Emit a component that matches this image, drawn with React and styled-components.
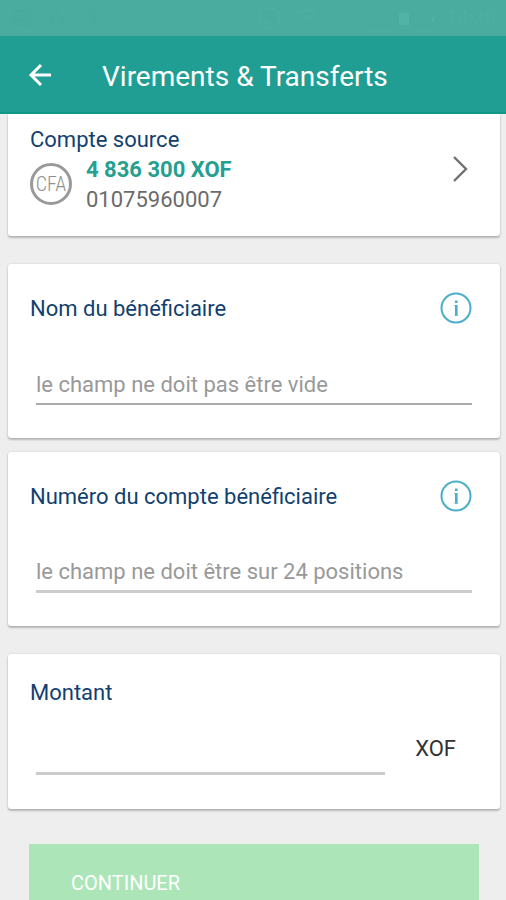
import React, { useState } from "react";
import styled, { createGlobalStyle } from "styled-components";

const GlobalStyle = createGlobalStyle`
  *, *::before, *::after { box-sizing: border-box; }
  body { margin: 0; background: #eeeeee; font-family: Roboto, "Liberation Sans", sans-serif; }
  button, input { font: inherit; }
`;

const Screen = styled.div`
  display: flex;
  flex-direction: column;
  height: 100vh;
`;

const StatusBar = styled.div`
  display: flex;
  flex: none;
  align-items: center;
  justify-content: space-between;
  height: 36px;
  padding: 0 10px;
  background: #49ac9e;
  color: #47aa9c;
`;

const StatusGroup = styled.div`
  display: flex;
  align-items: center;
  gap: 12px;
`;

const Clock = styled.span`
  color: #4cafa1;
  font-size: 20px;
  line-height: 20px;
`;

const AppBar = styled.header`
  display: flex;
  flex: none;
  align-items: center;
  gap: 46px;
  height: 78px;
  padding: 2px 24px 0;
  background: #209e93;
  border-bottom: 2px solid #129688;
  color: #ffffff;
`;

const IconButton = styled.button`
  display: flex;
  padding: 0;
  border: 0;
  background: none;
  color: ${({ $color }) => $color};
  cursor: pointer;
`;

const Title = styled.h1`
  margin: 0;
  padding-top: 4px;
  font-size: 28px;
  line-height: 32px;
  font-weight: 400;
`;

const Content = styled.main`
  flex: 1;
  min-height: 0;
  padding: 0 6px 28px 8px;
  overflow-y: auto;
  scrollbar-width: none;
`;

const Card = styled.section`
  padding: ${({ $padding }) => $padding || "28px 28px 33px 22px"};
  margin-bottom: ${({ $gap }) => $gap}px;
  border-radius: 3px;
  background: #ffffff;
  box-shadow: 0 2px 2px rgba(0, 0, 0, 0.22), 0 0 2px rgba(0, 0, 0, 0.16);
`;

const SourceCard = styled(Card)`
  display: flex;
  align-items: center;
  justify-content: space-between;
  border-radius: 0 0 3px 3px;
`;

const Heading = styled.h2`
  margin: 0;
  color: #123f70;
  font-size: 22px;
  line-height: 30px;
  font-weight: 400;
`;

const Account = styled.div`
  display: flex;
  align-items: flex-start;
  gap: 14px;
`;

const Badge = styled.div`
  display: flex;
  padding-top: 8px;
`;

const AccountText = styled.div`
  font-size: 22px;
  line-height: 30px;
`;

const Balance = styled.div`
  color: #259f91;
  font-weight: 700;
`;

const AccountNumber = styled.div`
  color: #6b6b6b;
`;

const FieldHeader = styled.div`
  display: flex;
  align-items: center;
  justify-content: space-between;
  height: 32px;
`;

const FieldLabel = styled.label`
  display: block;
  padding-top: 2px;
  color: #123f70;
  font-size: 22px;
  line-height: 30px;
`;

const FieldRow = styled.div`
  display: flex;
  align-items: flex-start;
  gap: 30px;
  padding: ${({ $padding }) => $padding || "39px 0 0 6px"};
`;

const TextField = styled.input`
  flex: 1;
  min-width: 0;
  height: 42px;
  padding: 2px 0 0;
  border: 0;
  border-bottom: ${({ $line }) => $line};
  border-radius: 0;
  outline: 0;
  background: none;
  color: #333333;
  font-size: 22px;
  &::placeholder { color: #999999; opacity: 1; }
`;

const Currency = styled.span`
  color: #333333;
  font-size: 22px;
  line-height: 32px;
`;

const SubmitButton = styled.button`
  display: block;
  width: calc(100% - 42px);
  height: 78px;
  margin: 0 21px;
  padding: 0 42px;
  border: 0;
  background: #ace6b8;
  color: #ffffff;
  font-size: 20px;
  text-align: left;
  cursor: pointer;
`;

const BackIcon = () => (
  <svg width="32" height="32" viewBox="0 0 32 32" fill="none" stroke="currentColor" strokeWidth="3" aria-hidden="true">
    <path d="M27 16H7M17 6L7 16l10 10" />
  </svg>
);

const ChevronIcon = () => (
  <svg width="16" height="28" viewBox="0 0 16 28" fill="none" stroke="currentColor" strokeWidth="2.400" aria-hidden="true">
    <path d="M2 1l12 12L2 25" />
  </svg>
);

const InfoIcon = () => (
  <svg width="32" height="32" viewBox="0 0 32 32" fill="none" aria-hidden="true">
    <circle cx="16" cy="16" r="14.500" stroke="currentColor" strokeWidth="2" />
    <path d="M15 8.500h2.600v2.500H15zM14.200 13h3.400v10h.6v.8h-3.800V23h.6v-9.200h-.8z" fill="currentColor" />
  </svg>
);

const CfaIcon = () => (
  <svg width="42" height="42" viewBox="0 0 42 42" aria-hidden="true">
    <circle cx="21" cy="21" r="19.500" fill="none" stroke="#999999" strokeWidth="3" />
    <text x="21" y="28" textAnchor="middle" fill="#8f8f8f" fontFamily="Roboto Condensed, Roboto, sans-serif" fontWeight="300" fontSize="20">CFA</text>
  </svg>
);

const NoticeIcons = () => (
  <svg width="90" height="24" viewBox="0 0 90 24" fill="none" stroke="currentColor" strokeWidth="2" aria-hidden="true">
    <path d="M4 5h16v14H4zM4 17l5-6 4 4 3-3 4 5M40 18l7-12 7 12zM88 6c-8-4-12 1-6 5 6 2 4 8-3 6" />
  </svg>
);

const SignalIcons = () => (
  <svg width="180" height="24" viewBox="0 0 180 24" fill="none" stroke="currentColor" strokeWidth="2" aria-hidden="true">
    <circle cx="16" cy="12" r="10" stroke="#4cafa1" />
    <path d="M9 5l14 14" />
    <path d="M44 8c6-5 12-5 18 0M48 13c3-3 7-3 10 0" stroke="#4cafa1" />
    <path d="M114 20h24M160 20h16" />
    <path d="M145 7h10v12h-10zM178 11h2v4h-2z" fill="#51b3a6" stroke="none" />
  </svg>
);

function Field({ id, label, placeholder, line, gap }) {
  const [value, setValue] = useState("");
  return (
    <Card $gap={gap}>
      <FieldHeader>
        <FieldLabel htmlFor={id}>{label}</FieldLabel>
        <IconButton type="button" $color="#4baec8" aria-label={"Informations : " + label}>
          <InfoIcon />
        </IconButton>
      </FieldHeader>
      <FieldRow>
        <TextField id={id} placeholder={placeholder} value={value} $line={line} onChange={(e) => setValue(e.target.value)} />
      </FieldRow>
    </Card>
  );
}

export default function App() {
  const [amount, setAmount] = useState("");
  return (
    <>
      <GlobalStyle />
      <Screen>
        <StatusBar>
          <NoticeIcons />
          <StatusGroup>
            <SignalIcons />
            <Clock>14:30</Clock>
          </StatusGroup>
        </StatusBar>
        <AppBar>
          <IconButton type="button" $color="#ffffff" aria-label="Retour">
            <BackIcon />
          </IconButton>
          <Title>Virements &amp; Transferts</Title>
        </AppBar>
        <Content>
          <SourceCard $padding="11px 32px 21px 22px" $gap={28}>
            <div>
              <Heading>Compte source</Heading>
              <Account>
                <Badge>
                  <CfaIcon />
                </Badge>
                <AccountText>
                  <Balance>4 836 300 XOF</Balance>
                  <AccountNumber>01075960007</AccountNumber>
                </AccountText>
              </Account>
            </div>
            <IconButton type="button" $color="#707070" aria-label="Choisir le compte source">
              <ChevronIcon />
            </IconButton>
          </SourceCard>
          <Field id="name" label="Nom du bénéficiaire" placeholder="le champ ne doit pas être vide" line="2px solid #aaaaaa" gap={14} />
          <Field id="account" label="Numéro du compte bénéficiaire" placeholder="le champ ne doit être sur 24 positions" line="3px solid #cccccc" gap={28} />
          <Card $padding="22px 28px 34px 22px" $gap={35}>
            <FieldLabel htmlFor="amount">Montant</FieldLabel>
            <FieldRow $padding="25px 16px 0 6px">
              <TextField id="amount" inputMode="decimal" value={amount} $line="3px solid #cccccc" onChange={(e) => setAmount(e.target.value)} />
              <Currency>XOF</Currency>
            </FieldRow>
          </Card>
          <SubmitButton type="button">CONTINUER</SubmitButton>
        </Content>
      </Screen>
    </>
  );
}
